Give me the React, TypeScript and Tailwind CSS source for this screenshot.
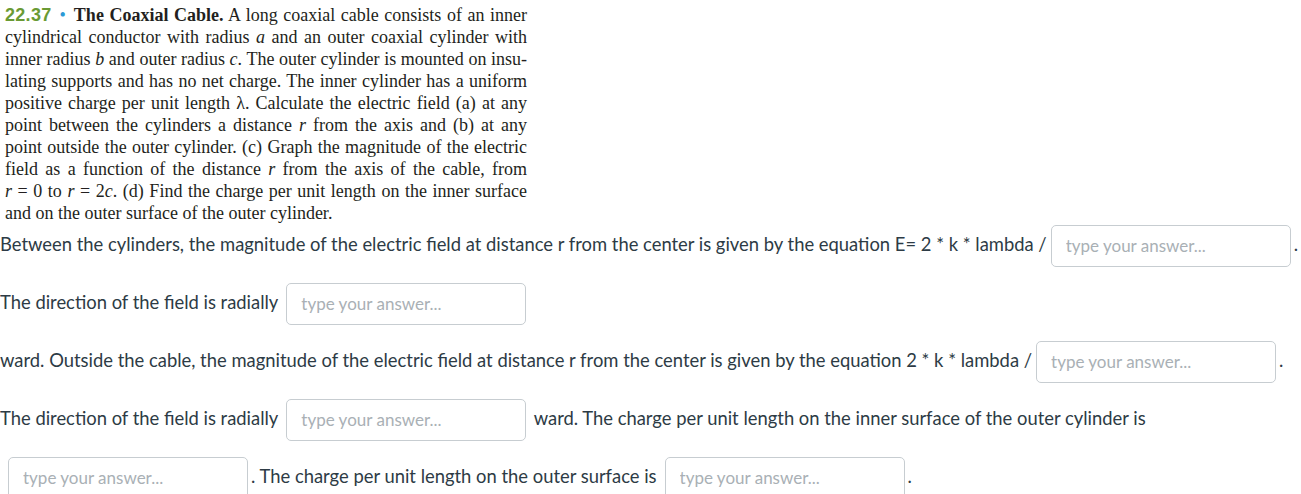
import React from 'react';

const serif = "font-['Liberation_Serif','Times_New_Roman',serif]";

const lines: React.ReactNode[] = [
  <>
    <span className="font-['Liberation_Sans',Arial,sans-serif] font-bold text-[#6a9a34] text-[18px] tracking-[0.3px]">22.37</span>
    <span className="text-[#2b9ad6] mx-[8px]">•</span>
    <b>The Coaxial Cable.</b> A long coaxial cable consists of an inner
  </>,
  <>
    cylindrical conductor with radius <i>a</i> and an outer coaxial cylinder with
  </>,
  <>
    inner radius <i>b</i> and outer radius <i>c</i>. The outer cylinder is mounted on insu-
  </>,
  <>lating supports and has no net charge. The inner cylinder has a uniform</>,
  <>positive charge per unit length λ. Calculate the electric field (a) at any</>,
  <>
    point between the cylinders a distance <i>r</i> from the axis and (b) at any
  </>,
  <>point outside the outer cylinder. (c) Graph the magnitude of the electric</>,
  <>
    field as a function of the distance <i>r</i> from the axis of the cable, from
  </>,
  <>
    <i>r</i> = 0 to <i>r</i> = 2<i>c</i>. (d) Find the charge per unit length on the inner surface
  </>,
];

const Blank: React.FC<{ tight?: boolean }> = ({ tight }) => (
  <input
    type="text"
    placeholder="type your answer..."
    className={`inline-block align-middle w-[240px] h-[42px] ${tight ? 'ml-[4px]' : 'ml-[8px]'} mr-[3px] px-[14px] border border-[#c7cdd1] rounded-[5px] bg-white text-[17px] text-[#2d3b45] placeholder:text-[#a9b0b5] outline-none`}
  />
);

export default function App() {
  return (
    <div className="w-[1301px] h-[494px] overflow-hidden bg-white">
      {/* Problem statement */}
      <div className={`${serif} w-[522px] ml-[5px] pt-[4px] text-[18px] leading-[22px] text-[#231f20]`}>
        {lines.map((l, i) => (
          <div key={i} className="text-justify whitespace-nowrap [text-align-last:justify]">
            {l}
          </div>
        ))}
        <div>and on the outer surface of the outer cylinder.</div>
      </div>

      {/* Fill in the blanks */}
      <p className="font-['Lato','Liberation_Sans',sans-serif] text-[18.4px] leading-[58px] text-[#2d3b45] whitespace-nowrap -mt-[9px]">
        Between the cylinders, the magnitude of the electric field at distance r from the center is given by the equation E= 2 * k * lambda /<Blank tight />.
        <br />
        The direction of the field is radially<Blank />
        <br />
        ward. Outside the cable, the magnitude of the electric field at distance r from the center is given by the equation 2 * k * lambda /<Blank tight />.
        <br />
        The direction of the field is radially<Blank /> ward. The charge per unit length on the inner surface of the outer cylinder is
        <br />
        <Blank />. The charge per unit length on the outer surface is<Blank />.
      </p>
    </div>
  );
}
